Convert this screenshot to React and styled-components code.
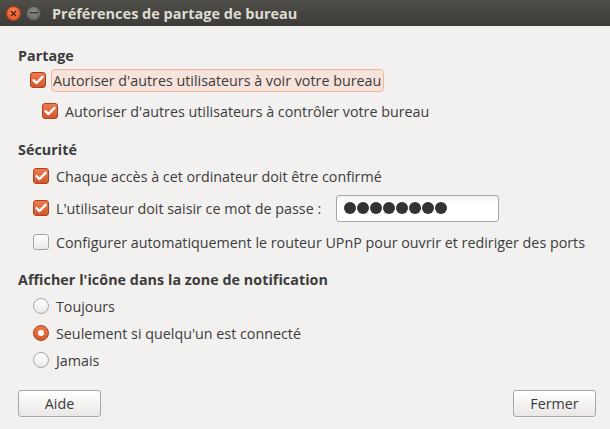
import React from "react";
import styled, { createGlobalStyle } from "styled-components";

const Global = createGlobalStyle`
  html, body { margin: 0; padding: 0; background: #f2f1f0; }
  body { font-family: "Open Sans", "Lato", sans-serif; font-size: 14.3px; color: #3c3c3c; }
`;

const Window = styled.div`
  width: 610px;
  height: 429px;
  background: #f2f1f0;
  display: flex;
  flex-direction: column;
  overflow: hidden;
`;

const TitleBar = styled.div`
  height: 26px;
  flex: none;
  display: flex;
  align-items: center;
  padding-left: 6px;
  gap: 5px;
  background: linear-gradient(#4f4e49, #3c3b37);
  color: #dfdbd2;
`;

const WinBtn = styled.div`
  width: 15px;
  height: 15px;
  border-radius: 50%;
  display: flex;
  align-items: center;
  justify-content: center;
  background: ${(p) =>
    p.$close
      ? "radial-gradient(circle at 50% 35%, #f7875a, #df4a16)"
      : "radial-gradient(circle at 50% 35%, #8d8b86, #62615d)"};
  border: 1px solid ${(p) => (p.$close ? "#b83c10" : "#4a4945")};
  box-sizing: border-box;
`;

const Title = styled.div`
  margin-left: 6px;
  font-weight: bold;
  font-size: 14.5px;
`;

const Content = styled.div`
  flex: 1;
  display: flex;
  flex-direction: column;
  padding: 20px 14px 0 18px;
`;

const Heading = styled.div`
  height: 20px;
  line-height: 20px;
  font-weight: bold;
  letter-spacing: 0.05px;
  margin-top: ${(p) => p.$top || 0}px;
`;

const Row = styled.div`
  height: ${(p) => p.$h || 24}px;
  display: flex;
  align-items: center;
  margin-top: ${(p) => p.$top || 0}px;
  padding-left: ${(p) => p.$indent || 0}px;
`;

const Box = styled.span`
  width: 16px;
  height: 16px;
  box-sizing: border-box;
  flex: none;
  border-radius: 3px;
  display: flex;
  align-items: center;
  justify-content: center;
  border: 1px solid ${(p) => (p.$on ? "#a8421f" : "#a7a6a3")};
  background: ${(p) =>
    p.$on ? "linear-gradient(#f07a4c, #d4582f)" : "linear-gradient(#ffffff, #ebeae8)"};
`;

const Radio = styled(Box)`
  border-radius: 50%;
`;

const Dot = styled.span`
  width: 6px;
  height: 6px;
  border-radius: 50%;
  background: #fff;
`;

const Label = styled.span`
  margin-left: ${(p) => p.$gap || 7}px;
  white-space: nowrap;
  ${(p) =>
    p.$focus &&
    `
    margin-left: 5px;
    padding: 1px 2px 1px 1px;
    border: 1px solid #f2b49a;
    border-radius: 4px;
    background: #f6e3db;
  `}
`;

const Entry = styled.div`
  width: 163px;
  height: 27px;
  box-sizing: border-box;
  margin-left: 15px;
  border: 1px solid #a7a6a3;
  border-radius: 3px;
  background: linear-gradient(#f4f4f4, #ffffff 30%);
  display: flex;
  align-items: center;
  padding-left: 7px;
  gap: 1px;
`;

const Bullet = styled.span`
  width: 12px;
  height: 12px;
  border-radius: 50%;
  background: #333333;
`;

const Buttons = styled.div`
  display: flex;
  justify-content: space-between;
  margin-top: 18px;
`;

const Button = styled.button`
  width: 83px;
  height: 27px;
  font: inherit;
  color: #3c3c3c;
  border: 1px solid #a9a8a5;
  border-radius: 3px;
  background: linear-gradient(#ffffff, #e9e8e6);
  box-shadow: 0 1px 0 rgba(255, 255, 255, 0.6);
  padding: 0;
`;

const Check = () => (
  <svg width="12" height="10" viewBox="0 0 12 10">
    <path d="M1.5 5.2 L4.5 8 L10.5 1.8" fill="none" stroke="#fff" strokeWidth="2.4" strokeLinecap="round" strokeLinejoin="round" />
  </svg>
);

const CheckBox = ({ on }) => <Box $on={on}>{on && <Check />}</Box>;
const RadioBtn = ({ on }) => <Radio $on={on}>{on && <Dot />}</Radio>;

export default function App() {
  return (
    <Window>
      <Global />
      <TitleBar>
        <WinBtn $close>
          <svg width="7" height="7" viewBox="0 0 7 7">
            <path d="M1 1 L6 6 M6 1 L1 6" stroke="#4a1c0a" strokeWidth="1.3" />
          </svg>
        </WinBtn>
        <WinBtn>
          <svg width="8" height="2" viewBox="0 0 8 2">
            <rect width="8" height="1.4" fill="#3a3935" />
          </svg>
        </WinBtn>
        <Title>Préférences de partage de bureau</Title>
      </TitleBar>
      <Content>
        <Heading>Partage</Heading>
        <Row $top={2} $indent={12}>
          <CheckBox on />
          <Label $focus>Autoriser d'autres utilisateurs à voir votre bureau</Label>
        </Row>
        <Row $top={7} $indent={24}>
          <CheckBox on />
          <Label>Autoriser d'autres utilisateurs à contrôler votre bureau</Label>
        </Row>

        <Heading $top={17}>Sécurité</Heading>
        <Row $top={4} $indent={15}>
          <CheckBox on />
          <Label>Chaque accès à cet ordinateur doit être confirmé</Label>
        </Row>
        <Row $top={6} $h={28} $indent={15}>
          <CheckBox on />
          <Label>L'utilisateur doit saisir ce mot de passe :</Label>
          <Entry>
            {Array.from({ length: 8 }).map((_, i) => (
              <Bullet key={i} />
            ))}
          </Entry>
        </Row>
        <Row $top={8} $indent={15}>
          <CheckBox />
          <Label>Configurer automatiquement le routeur UPnP pour ouvrir et rediriger des ports</Label>
        </Row>

        <Heading $top={16}>Afficher l'icône dans la zone de notification</Heading>
        <Row $top={4} $indent={15}>
          <RadioBtn />
          <Label>Toujours</Label>
        </Row>
        <Row $top={3} $indent={15}>
          <RadioBtn on />
          <Label>Seulement si quelqu'un est connecté</Label>
        </Row>
        <Row $top={3} $indent={15}>
          <RadioBtn />
          <Label>Jamais</Label>
        </Row>

        <Buttons>
          <Button>Aide</Button>
          <Button>Fermer</Button>
        </Buttons>
      </Content>
    </Window>
  );
}
